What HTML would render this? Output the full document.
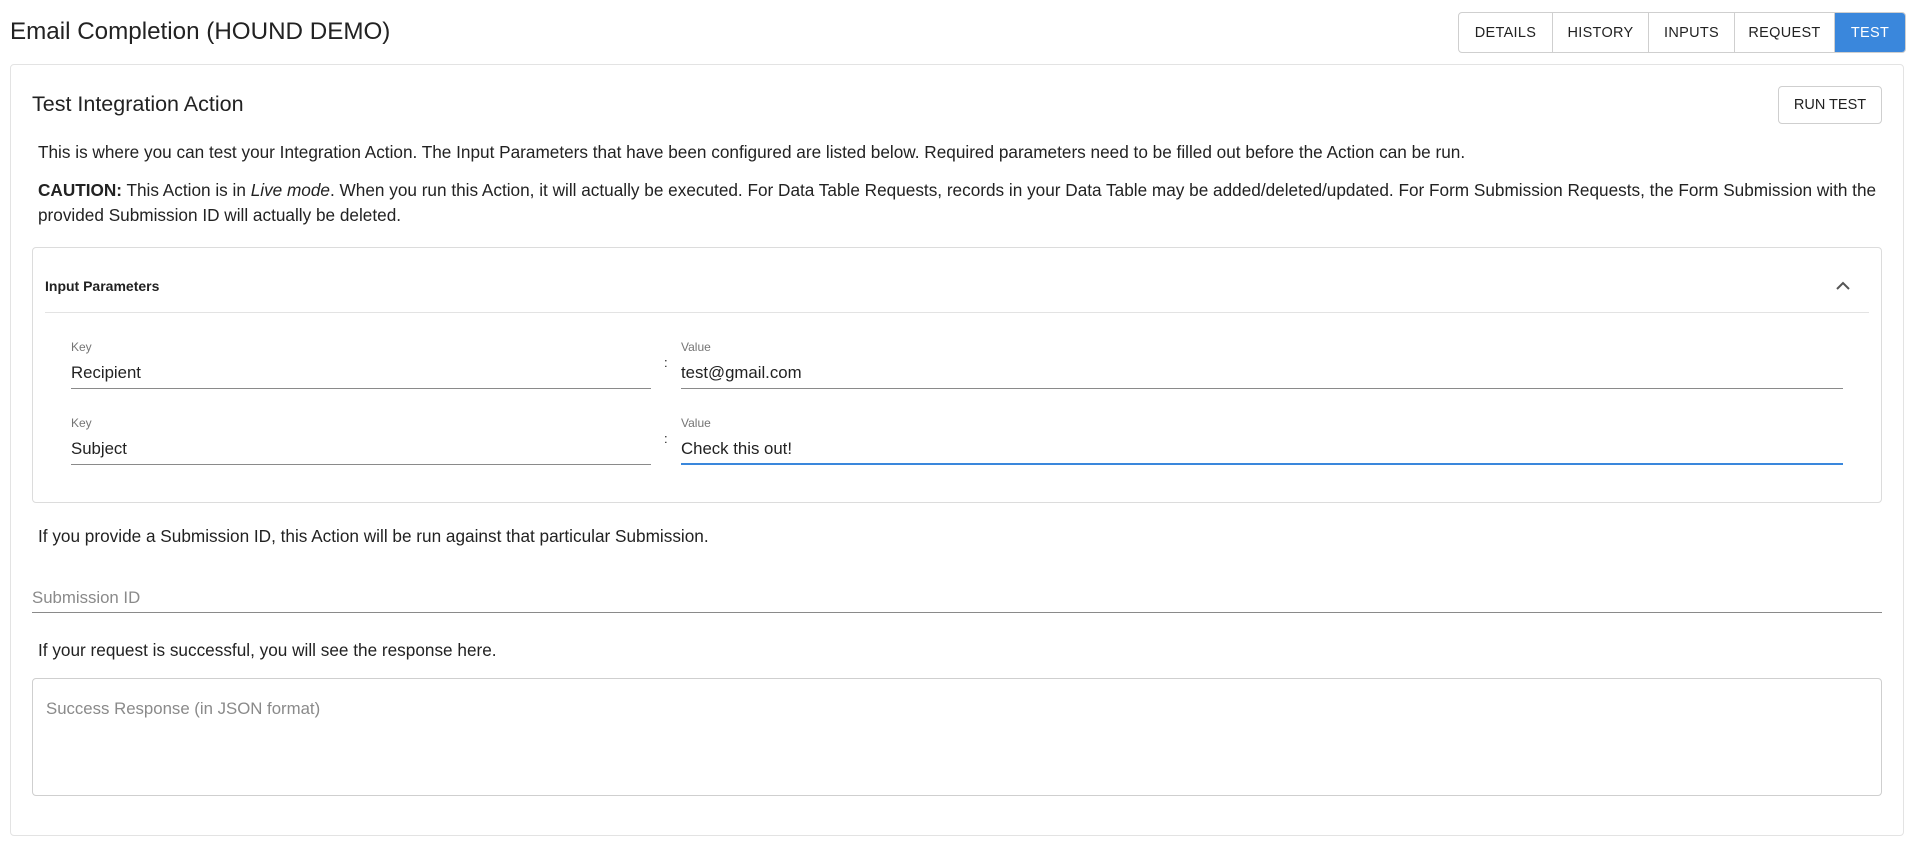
<!DOCTYPE html>
<html><head><meta charset="utf-8"><style>
*{box-sizing:border-box;margin:0;padding:0}
body{width:1920px;height:856px;background:#fff;font-family:"Liberation Sans",Arial,sans-serif;color:#212121;position:relative;overflow:hidden}
.a{position:absolute;white-space:nowrap}
.tabs{position:absolute;left:1458px;top:12px;height:41px;display:flex;border:1px solid #cfcfcf;border-radius:4px;overflow:hidden}
.tabs div{font-size:14.5px;font-weight:500;letter-spacing:.3px;display:flex;align-items:center;justify-content:center;border-right:1px solid #cfcfcf;color:#222}
.tabs div:last-child{border-right:none;background:#3a87dc;color:#fff}
.card{position:absolute;left:10px;top:64px;width:1894px;height:772px;border:1px solid #e3e3e3;border-radius:4px}
.p{font-size:17.2px;color:#222}
.lbl{font-size:12px;color:#757575}
.val{font-size:16.8px;color:#222}
.ul{position:absolute;height:1px;background:#8a8a8a}
</style></head><body>
<div class="a" style="left:10px;top:18px;font-size:24.2px;color:#222">Email Completion (HOUND DEMO)</div>
<div class="tabs"><div style="width:94px">DETAILS</div><div style="width:96px">HISTORY</div><div style="width:86px">INPUTS</div><div style="width:100px">REQUEST</div><div style="width:70px">TEST</div></div>
<div class="card"></div>
<div class="a" style="left:32px;top:92px;font-size:21.5px;color:#222">Test Integration Action</div>
<div class="a" style="left:1778px;top:86px;width:104px;height:38px;border:1px solid #cfcfcf;border-radius:4px;font-size:14.5px;font-weight:500;display:flex;align-items:center;justify-content:center">RUN TEST</div>
<div class="a p" style="left:38px;top:142px">This is where you can test your Integration Action. The Input Parameters that have been configured are listed below. Required parameters need to be filled out before the Action can be run.</div>
<div class="a p" style="left:38px;top:180px"><b>CAUTION:</b> This Action is in <i>Live mode</i>. When you run this Action, it will actually be executed. For Data Table Requests, records in your Data Table may be added/deleted/updated. For Form Submission Requests, the Form Submission with the</div>
<div class="a p" style="left:38px;top:205px">provided Submission ID will actually be deleted.</div>
<div class="a" style="left:32px;top:247px;width:1850px;height:256px;border:1px solid #dcdcdc;border-radius:4px"></div>
<div class="a" style="left:45px;top:278px;font-size:14px;font-weight:bold">Input Parameters</div>
<svg class="a" style="left:1835px;top:279px" width="16" height="14" viewBox="0 0 16 14"><path d="M2 10 L8 4 L14 10" fill="none" stroke="#555" stroke-width="2"/></svg>
<div class="a" style="left:45px;top:312px;width:1824px;height:1px;background:#e3e3e3"></div>
<div class="a lbl" style="left:71px;top:340px">Key</div>
<div class="a val" style="left:71px;top:363px">Recipient</div>
<div class="ul" style="left:71px;top:388px;width:580px"></div>
<div class="a" style="left:664px;top:355px;font-size:13px">:</div>
<div class="a lbl" style="left:681px;top:340px">Value</div>
<div class="a val" style="left:681px;top:363px">test@gmail.com</div>
<div class="ul" style="left:681px;top:388px;width:1162px"></div>
<div class="a lbl" style="left:71px;top:416px">Key</div>
<div class="a val" style="left:71px;top:439px">Subject</div>
<div class="ul" style="left:71px;top:464px;width:580px"></div>
<div class="a" style="left:664px;top:431px;font-size:13px">:</div>
<div class="a lbl" style="left:681px;top:416px">Value</div>
<div class="a val" style="left:681px;top:439px">Check this out!</div>
<div class="a" style="left:681px;top:463px;width:1162px;height:2px;background:#3a87dc"></div>
<div class="a p" style="left:38px;top:526px">If you provide a Submission ID, this Action will be run against that particular Submission.</div>
<div class="a" style="left:32px;top:588px;font-size:16.8px;color:#8a8a8a">Submission ID</div>
<div class="ul" style="left:32px;top:612px;width:1850px"></div>
<div class="a p" style="left:38px;top:640px">If your request is successful, you will see the response here.</div>
<div class="a" style="left:32px;top:678px;width:1850px;height:118px;border:1px solid #cfcfcf;border-radius:4px"></div>
<div class="a" style="left:46px;top:699px;font-size:16.8px;color:#8a8a8a">Success Response (in JSON format)</div>
</body></html>
